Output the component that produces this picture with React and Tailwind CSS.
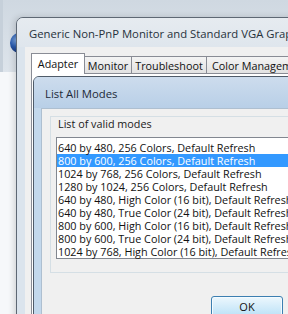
const modes = [
  '640 by 480, 256 Colors, Default Refresh',
  '800 by 600, 256 Colors, Default Refresh',
  '1024 by 768, 256 Colors, Default Refresh',
  '1280 by 1024, 256 Colors, Default Refresh',
  '640 by 480, High Color (16 bit), Default Refresh',
  '640 by 480, True Color (24 bit), Default Refresh',
  '800 by 600, High Color (16 bit), Default Refresh',
  '800 by 600, True Color (24 bit), Default Refresh',
  '1024 by 768, High Color (16 bit), Default Refresh',
];

const tabs = [
  { label: 'Monitor', width: 'w-[47px]' },
  { label: 'Troubleshoot', width: 'w-[75px]' },
];

const GlobeIcon = () => (
  <svg width="20" height="22" viewBox="0 0 20 22">
    <defs>
      <radialGradient id="globe" cx="0.35" cy="0.35" r="0.7">
        <stop offset="0" stopColor="#7fa8e0" />
        <stop offset="0.5" stopColor="#2a5cb0" />
        <stop offset="1" stopColor="#16306e" />
      </radialGradient>
    </defs>
    <ellipse cx="10" cy="11" rx="9" ry="10" fill="url(#globe)" />
  </svg>
);

const ModesDialog = () => (
  <div className="shrink-0 mt-[2px] ml-[1px] w-[300px] h-[260px] rounded-tl-[6px] border border-[#4f5b69] bg-[#c3d8ec] flex flex-col">
    <div className="shrink-0 h-[31px] rounded-tl-[5px] bg-gradient-to-b from-[#cddced] to-[#b8cfe7] pl-[11px] pt-[9px]">
      <span className="block text-[11.3px] leading-[16px] text-[#1d2a38]">List All Modes</span>
    </div>
    <div className="flex-1 pl-[7px] flex">
      <div className="flex-1 bg-[#f0f0f0] border-l border-t border-[#aebfd0] pl-[8px] pt-[7px]">
        <div className="border-t border-l border-b border-[#d5dfe5] px-[5px] pb-[13px]">
          <div className="ml-[2px] text-[10.8px] leading-[13px] text-[#1a1a1a]">List of valid modes</div>
          <div className="mt-[7px] border-t border-l border-b border-[#828790] bg-white pt-[3px]">
            {modes.map((m, i) => (
              <div
                key={m}
                className={`h-[13px] pl-px text-[10.8px] leading-[13px] whitespace-nowrap ${
                  i === 1 ? 'bg-[#3399ff] text-white' : 'text-[#111]'
                }`}
              >
                {m}
              </div>
            ))}
          </div>
        </div>
        <div className="pl-[161px] pt-[20px]">
          <button className="w-[72px] h-[22px] rounded-[3px] border border-[#3c7fb1] bg-gradient-to-b from-[#ecf7fd] to-[#b9e0f6] shadow-[inset_0_0_0_1px_#f4fbff] text-[11px] text-[#111]">
            OK
          </button>
        </div>
      </div>
    </div>
  </div>
);

const PropertiesWindow = () => (
  <div className="absolute left-[16px] top-[17px] w-[300px] h-[340px] rounded-tl-[7px] border border-[#5e6874] bg-[#dbe4ed] flex flex-col shadow-[-2px_0_6px_rgba(0,0,0,0.15)]">
    <div className="shrink-0 h-[29px] rounded-tl-[6px] bg-gradient-to-b from-[#e6ebf0] to-[#dfe6ed] pl-[12px] pt-[8px]">
      <span className="block text-[11.3px] leading-[16px] text-[#27313c] whitespace-nowrap">
        Generic Non-PnP Monitor and Standard VGA Graphics Adapter Properties
      </span>
    </div>
    <div className="flex-1 pl-[8px] flex">
      <div className="flex-1 bg-[#f0f0f0] pl-[6px] pt-[6px] flex flex-col">
        <div className="shrink-0 flex items-end h-[20px] text-[10.8px] text-[#111]">
          <div className="relative z-10 w-[54px] h-[21px] -mb-px border border-b-0 border-[#898c95] bg-white text-center leading-[19px]">
            Adapter
          </div>
          {tabs.map((t) => (
            <div
              key={t.label}
              className={`${t.width} h-[17px] border-t border-r border-[#898c95] bg-gradient-to-b from-[#f4f4f4] to-[#e2e2e2] text-center leading-[17px]`}
            >
              {t.label}
            </div>
          ))}
          <div className="h-[17px] border-t border-r border-[#898c95] bg-gradient-to-b from-[#f4f4f4] to-[#e2e2e2] px-[5px] leading-[17px] whitespace-nowrap">
            Color Management
          </div>
        </div>
        <div className="flex-1 border-t border-l border-[#898c95] bg-white">
          <ModesDialog />
        </div>
      </div>
    </div>
  </div>
);

export default function App() {
  return (
    <div className="relative w-[288px] h-[314px] overflow-hidden font-['Open_Sans',sans-serif] bg-[#f6f8fa]">
      <div className="flex flex-col h-full">
        <div className="h-[72px] bg-gradient-to-b from-[#cfd8e1] to-[#dde4eb] border-l-[3px] border-[#c6d0da] pl-[6px] pt-[32px]">
          <GlobeIcon />
        </div>
        <div className="flex-1 bg-[#f6f8fa]" />
      </div>
      <PropertiesWindow />
    </div>
  );
}
